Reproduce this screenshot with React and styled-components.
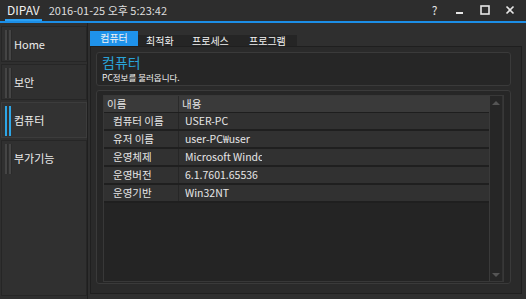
import React from 'react'
import styled, { createGlobalStyle } from 'styled-components'

const GlobalStyle = createGlobalStyle`
  html, body { margin: 0; padding: 0; background: #2f2f2f; }
  * { box-sizing: border-box; }
  body { font-family: "Noto Sans CJK KR", "Noto Sans", sans-serif; }
`

const menu = ['Home', '보안', '컴퓨터', '부가기능']
const tabs = [
  { label: '컴퓨터', w: 48 },
  { label: '최적화', w: 46 },
  { label: '프로세스', w: 57 },
  { label: '프로그램', w: 48 },
]
const rows = [
  ['컴퓨터 이름', 'USER-PC'],
  ['유저 이름', 'user-PC₩user'],
  ['운영체제', 'Microsoft Windows 7 Professional'],
  ['운영버전', '6.1.7601.65536'],
  ['운영기반', 'Win32NT'],
]

const App = () => {
  return (
    <Window>
      <GlobalStyle />
      <TitleBar>
        <Brand>DIPAV</Brand>
        <Clock>2016-01-25 오후 5:23:42</Clock>
        <Controls>
          <Ctrl>?</Ctrl>
          <Ctrl>
            <svg width="9" height="9" viewBox="0 0 9 9"><rect x="1" y="7" width="7" height="2" fill="#e6e6e6" /></svg>
          </Ctrl>
          <Ctrl>
            <svg width="10" height="10" viewBox="0 0 10 10"><rect x="1" y="1" width="8" height="8" fill="none" stroke="#e6e6e6" strokeWidth="1.6" /></svg>
          </Ctrl>
          <Ctrl>
            <svg width="10" height="10" viewBox="0 0 10 10"><path d="M1.5 1.5 L8.5 8.5 M8.5 1.5 L1.5 8.5" stroke="#e6e6e6" strokeWidth="1.6" /></svg>
          </Ctrl>
        </Controls>
      </TitleBar>
      <Body>
        <Sidebar>
          {menu.map((m, i) => (
            <MenuItem key={m} $active={i === 2} $last={i === menu.length - 1}>
              <Bars $active={i === 2}><i /><i /></Bars>
              <span>{m}</span>
            </MenuItem>
          ))}
        </Sidebar>
        <Main>
          <TabStrip>
            {tabs.map((t, i) => (
              <Tab key={t.label} $active={i === 0} $w={t.w}>{t.label}</Tab>
            ))}
          </TabStrip>
          <Panel>
            <HeaderBox>
              <Title>컴퓨터</Title>
              <Subtitle>PC정보를 불러옵니다.</Subtitle>
            </HeaderBox>
            <TableFrame>
              <Grid>
                <Table>
                  <HeadRow>
                    <HeadCell $w={75}>이름</HeadCell>
                    <HeadCell>내용</HeadCell>
                  </HeadRow>
                  {rows.map(([k, v]) => (
                    <Row key={k}>
                      <Cell $w={75}>{k}</Cell>
                      <Cell><Clip>{v}</Clip></Cell>
                    </Row>
                  ))}
                </Table>
                <Scrollbar>
                  <Arrow />
                  <Arrow $down />
                </Scrollbar>
              </Grid>
            </TableFrame>
          </Panel>
        </Main>
      </Body>
    </Window>
  )
}

const Window = styled.div`
  width: 526px;
  height: 299px;
  background: #2f2f2f;
  display: flex;
  flex-direction: column;
  overflow: hidden;
`

const TitleBar = styled.div`
  height: 23px;
  display: flex;
  align-items: center;
  background: #2d2d2d;
  border-bottom: 2px solid #1c8ee6;
  padding: 0 0 2px 5px;
  color: #f0f0f0;
`

const Brand = styled.div`
  font-size: 12px;
  padding: 0 2px;
  height: 21px;
  line-height: 20px;
  border-bottom: 2px solid #2aa0f5;
  margin-top: 1px;
`

const Clock = styled.div`
  font-size: 11px;
  margin-left: 7px;
  color: #dedede;
`

const Controls = styled.div`
  margin-left: auto;
  display: flex;
  align-items: center;
  margin-right: 4px;
`

const Ctrl = styled.div`
  width: 25px;
  height: 20px;
  display: flex;
  align-items: center;
  justify-content: center;
  font-size: 12px;
  color: #e6e6e6;
`

const Body = styled.div`
  flex: 1;
  display: flex;
  min-height: 0;
`

const Sidebar = styled.div`
  width: 88px;
  padding: 3px 0 3px 1px;
  display: flex;
  flex-direction: column;
  gap: 2px;
  border-right: 1px solid #1f1f1f;
`

const MenuItem = styled.div`
  height: ${p => (p.$last ? 'auto' : '36px')};
  flex: ${p => (p.$last ? 1 : 'none')};
  display: flex;
  align-items: ${p => (p.$last ? 'flex-start' : 'center')};
  background: ${p => (p.$active ? '#323232' : '#303030')};
  border: 1px solid ${p => (p.$active ? '#3c3c3c' : '#262626')};
  position: relative;
  color: #ececec;
  font-size: 11px;
  padding-left: 12px;
  padding-top: ${p => (p.$last ? '9px' : '0')};
  span { line-height: 16px; }
`

const Bars = styled.div`
  position: absolute;
  left: 3px;
  top: 3px;
  height: 30px;
  display: flex;
  gap: 2px;
  i {
    display: block;
    width: 2px;
    height: 100%;
    background: ${p => (p.$active ? '#2ea6e6' : '#454545')};
    box-shadow: ${p => (p.$active ? 'none' : '1px 0 0 #2a2a2a')};
  }
`

const Main = styled.div`
  flex: 1;
  display: flex;
  flex-direction: column;
  padding: 8px 4px 5px 2px;
  min-width: 0;
`

const TabStrip = styled.div`
  display: flex;
  align-items: flex-end;
  height: 15px;
  width: 207px;
  background: linear-gradient(#2f2f2f 0 4px, #252525 4px);
`

const Tab = styled.div`
  width: ${p => p.$w}px;
  height: ${p => (p.$active ? '15px' : '11px')};
  margin-right: ${p => (p.$active ? '8px' : '0')};
  background: ${p => (p.$active ? '#1f92ea' : 'transparent')};
  color: #f2f2f2;
  font-size: 10px;
  line-height: ${p => (p.$active ? '14px' : '11px')};
  white-space: nowrap;
  text-align: ${p => (p.$active ? 'center' : 'left')};
`

const Panel = styled.div`
  flex: 1;
  background: #2a2a2a;
  border: 1px solid #1f1f1f;
  padding: 5px 10px 9px 5px;
  display: flex;
  flex-direction: column;
  gap: 4px;
`

const HeaderBox = styled.div`
  height: 34px;
  border: 1px solid #3a3a3a;
  border-radius: 3px;
  background: #262626;
  padding: 2px 5px;
`

const Title = styled.div`
  color: #2aa3d8;
  font-size: 14px;
  line-height: 15px;
`

const Subtitle = styled.div`
  color: #f2f2f2;
  font-size: 8.5px;
  line-height: 10px;
  margin-top: 2px;
`

const TableFrame = styled.div`
  flex: 1;
  border: 1px solid #3a3a3a;
  border-radius: 3px;
  background: #262626;
  padding: 4px 6px 1px 6px;
  display: flex;
`

const Grid = styled.div`
  flex: 1;
  display: flex;
  border: 1px solid #383838;
  background: #242424;
`

const Table = styled.div`
  flex: 1;
  display: flex;
  flex-direction: column;
`

const HeadRow = styled.div`
  display: flex;
  height: 17px;
  background: #3a3a3a;
  border-bottom: 1px solid #1e1e1e;
`

const Row = styled.div`
  display: flex;
  height: 18px;
  background: #313131;
  border-bottom: 2px solid #1f1f1f;
`

const HeadCell = styled.div`
  width: ${p => (p.$w ? `${p.$w}px` : 'auto')};
  flex: ${p => (p.$w ? 'none' : 1)};
  border-right: ${p => (p.$w ? '1px solid #2a2a2a' : 'none')};
  color: #e6e6e6;
  font-size: 10.5px;
  line-height: 16px;
  padding-left: 3px;
`

const Cell = styled.div`
  width: ${p => (p.$w ? `${p.$w}px` : 'auto')};
  flex: ${p => (p.$w ? 'none' : 1)};
  border-right: ${p => (p.$w ? '1px solid #262626' : 'none')};
  color: #e6e6e6;
  font-size: 10.5px;
  line-height: 16px;
  padding-left: ${p => (p.$w ? '9px' : '6px')};
  white-space: nowrap;
`

const Clip = styled.span`
  display: inline-block;
  width: 77px;
  overflow: hidden;
  vertical-align: top;
`

const Scrollbar = styled.div`
  width: 14px;
  border-left: 1px solid #3a3a3a;
  border-right: 1px solid #333;
  background: #262626;
  display: flex;
  flex-direction: column;
  justify-content: space-between;
  align-items: center;
  padding: 5px 0 4px;
`

const Arrow = styled.div`
  width: 0;
  height: 0;
  border-left: 4px solid transparent;
  border-right: 4px solid transparent;
  ${p => (p.$down ? 'border-top: 4px solid #555;' : 'border-bottom: 4px solid #555;')}
`

export default App
